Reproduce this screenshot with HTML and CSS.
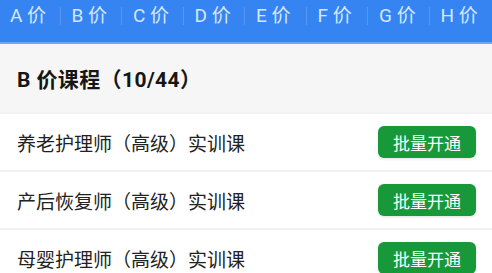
FILE: index.html
```html
<!DOCTYPE html>
<html lang="zh-CN">
<head>
<meta charset="utf-8">
<title>B价课程</title>
<link rel="stylesheet" href="styles.css">
</head>
<body>
<nav class="tabs">
  <div class="tab">A 价</div>
  <div class="tab">B 价</div>
  <div class="tab">C 价</div>
  <div class="tab">D 价</div>
  <div class="tab">E 价</div>
  <div class="tab">F 价</div>
  <div class="tab">G 价</div>
  <div class="tab">H 价</div>
</nav>
<section class="head">
  <h2 class="title">B 价课程（10/44）</h2>
</section>
<ul class="list">
  <li class="row"><span class="name">养老护理师（高级）实训课</span><button class="btn">批量开通</button></li>
  <li class="row"><span class="name">产后恢复师（高级）实训课</span><button class="btn">批量开通</button></li>
  <li class="row"><span class="name">母婴护理师（高级）实训课</span><button class="btn">批量开通</button></li>
</ul>
</body>
</html>
```
FILE: styles.css
```css
* { box-sizing: border-box; }
html, body { margin: 0; padding: 0; }
body {
  width: 492px;
  height: 273px;
  overflow: hidden;
  background: #f6f6f7;
  font-family: Roboto, "Noto Sans CJK SC", sans-serif;
  color: #1e1e1e;
}
.tabs {
  display: flex;
  height: 44px;
  background: #3584f1;
  border-bottom: 2px solid #6fa8f4;
  padding-top: 3px;
}
.tab {
  flex: 1;
  position: relative;
  padding-left: 10px;
  font-size: 19px;
  line-height: 26px;
  height: 26px;
  color: #d6e7fd;
  white-space: nowrap;
}
.tab + .tab::before {
  content: "";
  position: absolute;
  left: -2px;
  top: 4px;
  width: 1px;
  height: 18px;
  background: rgba(255, 255, 255, 0.16);
}
.head {
  height: 68px;
  display: flex;
  align-items: center;
  padding: 0 17px;
}
.title {
  margin: 0;
  font-size: 21px;
  font-weight: 700;
  letter-spacing: 0.4px;
  color: #161616;
}
.list {
  list-style: none;
  margin: 0;
  padding: 0;
}
.row {
  height: 58px;
  display: flex;
  align-items: center;
  justify-content: space-between;
  padding: 0 16px 0 17px;
  background: #fff;
  border-top: 2px solid #f1f1f2;
}
.name {
  font-size: 19px;
  color: #222;
}
.btn {
  width: 98px;
  height: 32px;
  border: none;
  border-radius: 6px;
  background: #17993a;
  color: #fff;
  font-family: "Noto Sans CJK SC", sans-serif;
  font-size: 17px;
  padding: 0;
  box-shadow: 0 1px 3px rgba(0, 0, 0, 0.12);
}
```
